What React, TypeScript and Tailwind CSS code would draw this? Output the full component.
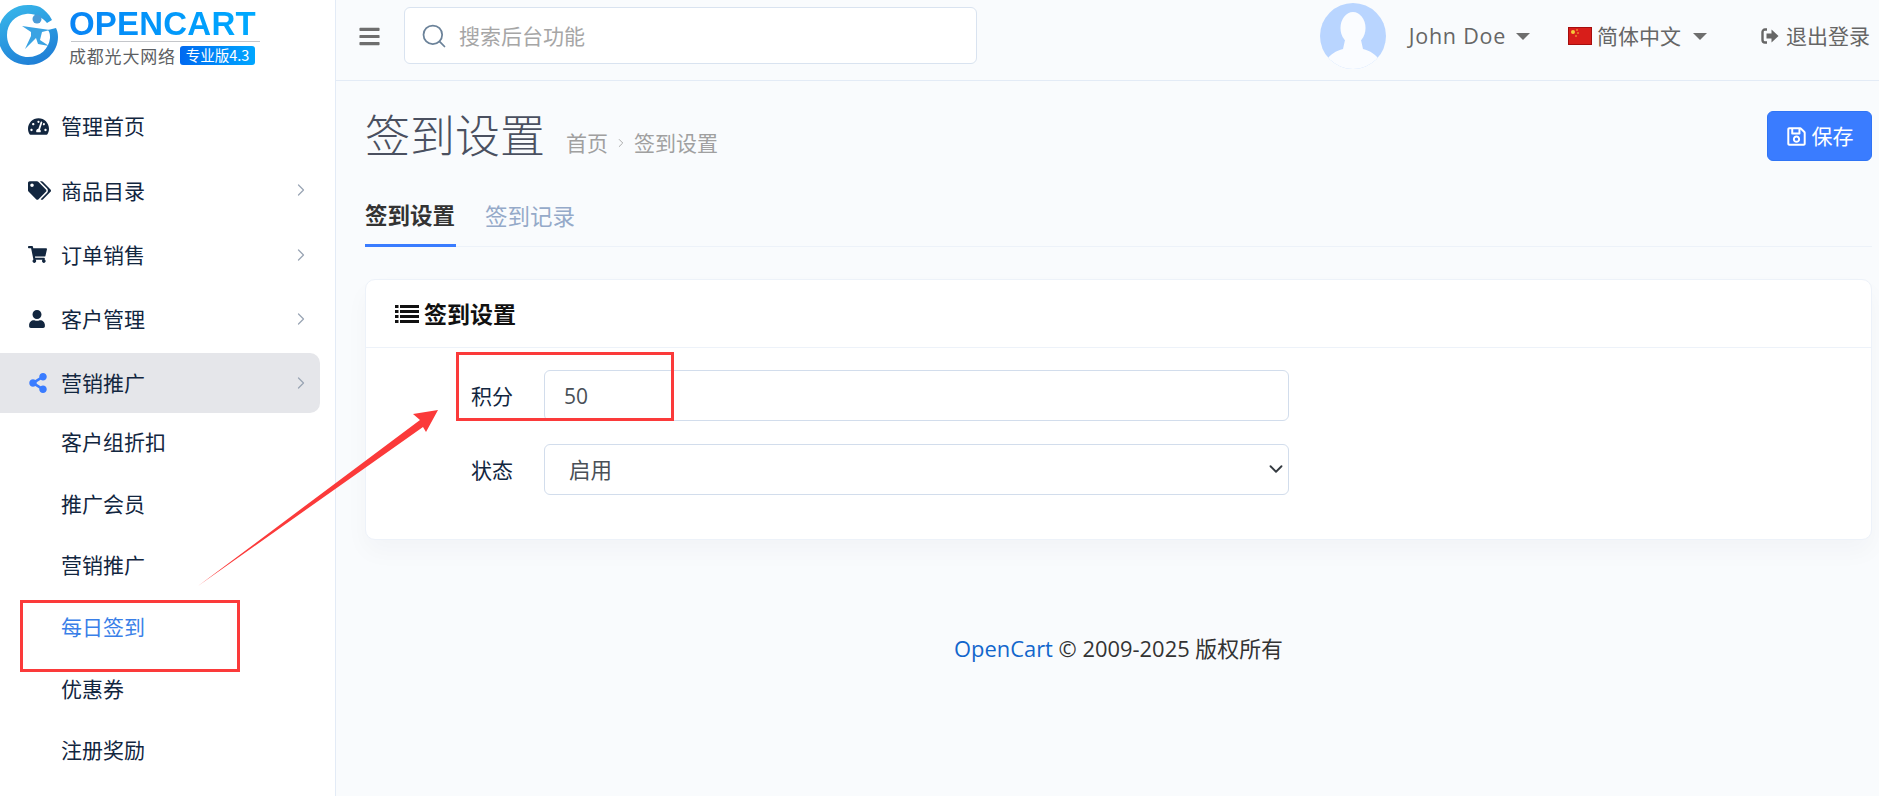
import { ChevronDown, ChevronRight, Search } from "lucide-react";
import { FaBars, FaRegSave, FaShareAlt, FaShoppingCart, FaTachometerAlt, FaTags, FaUser } from "react-icons/fa";
import type { ReactNode } from "react";

function Logo() {
  return (
    <div className="relative h-[80px]">
      <svg className="absolute left-[-2px] top-[5px]" width="60" height="60" viewBox="0 0 60 60">
        <defs>
          <linearGradient id="ring" x1="0.2" y1="0" x2="0.6" y2="1">
            <stop offset="0" stopColor="#38b6ea" />
            <stop offset="1" stopColor="#1f7fd6" />
          </linearGradient>
        </defs>
        <path
          d="M42 2C36 0 33 0 30 0C13 0 0 13 0 30C0 47 13 60 30 60C47 60 60 47 60 32C60 28 59 25 58 23L50 25C52 28 52 30 52 33C51 44 42 52 30 52C18 52 9 42 9 30C9 19 17 10 28 9C36 8 44 12 49 18L54 15C51 9 47 5 42 2Z"
          fill="url(#ring)"
        />
        <circle cx="39" cy="14" r="4.5" fill="#4a9bd8" />
        <path d="M24 21L52 25L44 27L42 35L51 41L40 39L38 33L27 44L33 31L33 27Z" fill="#3aa3e3" />
      </svg>
      <div className="absolute left-[69px] top-[5px] bg-gradient-to-r from-[#0a84f5] to-[#00aaff] bg-clip-text font-['Liberation_Sans',sans-serif] text-[33px] leading-[38px] font-bold tracking-[0.2px] text-transparent">
        OPENCART
      </div>
      <div className="absolute left-[71px] top-[41px] h-px w-[189px] bg-[#c4c6ca]" />
      <div className="absolute left-[69px] top-[46px] text-[17px] leading-[20px] tracking-[0.8px] text-[#5d5f63]">成都光大网络</div>
      <div className="absolute left-[180px] top-[46px] flex h-[19px] w-[75px] items-center justify-center rounded-[3px] bg-gradient-to-r from-[#0069f0] to-[#00a6ff] text-[14.5px] leading-none text-white">
        专业版4.3
      </div>
    </div>
  );
}

function NavItem({ icon, label, arrow, active }: { icon: ReactNode; label: string; arrow?: boolean; active?: boolean }) {
  return (
    <div className={`mb-[4.25px] flex h-[60px] items-center rounded-r-[10px] pl-[28px] pr-[9px] ${active ? "bg-[#e5e6ea]" : ""}`}>
      <span className={`flex w-[33px] shrink-0 items-center text-[20px] ${active ? "text-[#3a7cff]" : "text-[#12263f]"}`}>{icon}</span>
      <span className="flex-1 text-[21px] text-[#12263f]">{label}</span>
      {arrow && <ChevronRight size={20} strokeWidth={1.5} className="text-[#9aa5b5]" />}
    </div>
  );
}

const subItems = ["客户组折扣", "推广会员", "营销推广", "每日签到", "优惠券", "注册奖励"];

function Sidebar() {
  return (
    <aside className="w-[336px] shrink-0 border-r border-[#e3ebf6] bg-white pr-[15px]">
      <Logo />
      <nav className="pt-[16px]">
        <NavItem icon={<FaTachometerAlt className="text-[21px]" />} label="管理首页" />
        <NavItem icon={<FaTags className="text-[23px]" />} label="商品目录" arrow />
        <NavItem icon={<FaShoppingCart className="text-[19px]" />} label="订单销售" arrow />
        <NavItem icon={<FaUser className="text-[18px]" />} label="客户管理" arrow />
        <NavItem icon={<FaShareAlt />} label="营销推广" arrow active />
        <ul className="-mt-[6px]">
          {subItems.map((item) => (
            <li
              key={item}
              className={`flex h-[61.6px] items-center pl-[61px] text-[21px] ${item === "每日签到" ? "text-[#3a7fe8]" : "text-[#12263f]"}`}
            >
              {item}
            </li>
          ))}
        </ul>
      </nav>
    </aside>
  );
}

function Caret() {
  return <span className="h-0 w-0 border-x-[7px] border-t-[7px] border-x-transparent border-t-[#6e6e6e]" />;
}

function Topbar() {
  return (
    <header className="flex h-[81px] items-center border-b border-[#e3ebf6] pb-[8px] pl-[22px] pr-[9px] text-[#666]">
      <FaBars className="mr-[23px] text-[23px] text-[#6e6e6e]" />
      <div className="-mt-[1px] flex h-[57px] w-[573px] items-center rounded-[6px] border border-[#d9e3f0] bg-white pl-[15px]">
        <Search size={28} strokeWidth={1.5} className="mr-[11px] shrink-0 text-[#6b8299]" />
        <input
          readOnly
          placeholder="搜索后台功能"
          className="w-full bg-transparent text-[21px] outline-none placeholder:text-[#a6a6a6]"
        />
      </div>
      <div className="flex-1" />
      <svg width="66" height="66" viewBox="0 0 66 66" className="mr-[23px]">
        <defs>
          <clipPath id="avatar">
            <circle cx="33" cy="33" r="33" />
          </clipPath>
        </defs>
        <g clipPath="url(#avatar)">
          <rect width="66" height="66" fill="#b9d5ff" />
          <ellipse cx="33" cy="25" rx="12.5" ry="16" fill="#fafcff" />
          <path d="M25 37L41 37L43 46C50 48 56 51 60 58L60 66L6 66L6 58C10 51 16 48 23 46Z" fill="#fafcff" />
        </g>
      </svg>
      <span className="mr-[10px] font-['Open_Sans',sans-serif] text-[21.5px] tracking-[0.75px]">John Doe</span>
      <Caret />
      <svg width="24" height="18" viewBox="0 0 24 18" className="ml-[38px] mr-[5px]">
        <rect width="24" height="18" fill="#a50d0d" />
        <rect x="1" y="1" width="22" height="16" fill="#d81e1a" />
        <circle cx="5" cy="5" r="2" fill="#f5c93a" />
        <circle cx="9" cy="3" r="0.8" fill="#f5c93a" />
        <circle cx="10" cy="6" r="0.8" fill="#f5c93a" />
        <circle cx="8" cy="9" r="0.8" fill="#f5c93a" />
      </svg>
      <span className="mr-[12px] text-[21px]">简体中文</span>
      <Caret />
      <svg width="18" height="16" viewBox="0 0 18 16" className="ml-[54px] mr-[7px] text-[#666]">
        <path d="M6 1.5H4A2.5 2.5 0 0 0 1.5 4V12A2.5 2.5 0 0 0 4 14.5H6" fill="none" stroke="currentColor" strokeWidth="2.4" />
        <path d="M5.5 5.5H10.5V1.5L17.5 8L10.5 14.5V10.5H5.5Z" fill="currentColor" />
      </svg>
      <span className="text-[21px]">退出登录</span>
    </header>
  );
}

function Field({ label, children }: { label: string; children: ReactNode }) {
  return (
    <div className="flex h-[51px] items-center">
      <label className="w-[73px] text-[21px] text-[#12263f]">{label}</label>
      {children}
    </div>
  );
}

function SettingsCard() {
  return (
    <section className="mt-[32px] h-[261px] rounded-[10px] border border-[#edf2f9] bg-white shadow-[0_12px_24px_rgba(18,38,63,0.03)]">
      <div className="flex h-[68px] items-center gap-[5px] border-b border-[#edf2f9] pl-[29px] text-[23px] font-bold text-[#111]">
        <svg width="24" height="18" viewBox="0 0 24 18" fill="currentColor">
          <rect y="0" width="3.5" height="3" />
          <rect x="5" y="0" width="19" height="3" />
          <rect y="5" width="3.5" height="3" />
          <rect x="5" y="5" width="19" height="3" />
          <rect y="10" width="3.5" height="3" />
          <rect x="5" y="10" width="19" height="3" />
          <rect y="15" width="3.5" height="3" />
          <rect x="5" y="15" width="19" height="3" />
        </svg>
        签到设置
      </div>
      <div className="flex flex-col gap-[23px] pl-[105px] pt-[22px]">
        <Field label="积分">
          <input
            readOnly
            value="50"
            className="h-full w-[745px] rounded-[6px] border border-[#d2ddec] bg-white pl-[19px] font-['Open_Sans',sans-serif] text-[21px] text-[#495057] outline-none"
          />
        </Field>
        <Field label="状态">
          <div className="relative h-full w-[745px]">
            <select className="h-full w-full appearance-none rounded-[6px] border border-[#d2ddec] bg-white pl-[24px] text-[21.5px] text-[#495057] outline-none">
              <option>启用</option>
            </select>
            <ChevronDown size={22} strokeWidth={2} className="absolute right-[2px] top-[14px] text-[#343a40]" />
          </div>
        </Field>
      </div>
    </section>
  );
}

function Annotations() {
  return (
    <>
      <div className="absolute left-[20px] top-[600px] h-[72px] w-[220px] border-[3px] border-[#fb3a3a]" />
      <div className="absolute left-[456px] top-[352px] h-[69px] w-[218px] border-[3px] border-[#fb3a3a]" />
      <svg className="absolute left-[190px] top-[400px]" width="260" height="195" viewBox="190 400 260 195">
        <path d="M198 586L420 420L413 414L438 410L426 432L423 427Z" fill="#fb3a3a" />
      </svg>
    </>
  );
}

export default function App() {
  return (
    <div className="relative flex h-[796px] w-full overflow-hidden bg-[#f9fbfd] font-['Noto_Sans_CJK_SC','Open_Sans',sans-serif]">
      <Sidebar />
      <main className="min-w-0 flex-1">
        <Topbar />
        <div className="pl-[29px] pr-[7px] pt-[15px]">
          <div className="flex h-[80px] items-center">
            <h1 className="-mt-[6px] text-[45px] leading-none font-light text-[#4a5060]">签到设置</h1>
            <div className="ml-[21px] mt-[14px] flex items-center text-[21px] text-[#a0a0a0]">
              <span>首页</span>
              <ChevronRight size={14} strokeWidth={1.5} className="mx-[6px]" />
              <span>签到设置</span>
            </div>
            <button className="ml-auto flex h-[50px] w-[105px] items-center justify-center gap-[5px] rounded-[6px] border border-[#2f74f5] bg-[#3a7cff] text-[21px] text-white">
              <FaRegSave className="text-[21px]" />
              保存
            </button>
          </div>
          <div className="mt-[9px] flex h-[62px] gap-[29px] border-b border-[#edf2f9]">
            <div className="-mb-px flex w-[91px] items-center border-b-[3px] border-[#3a7cff] text-[22.5px] font-bold text-[#333]">签到设置</div>
            <div className="flex items-center text-[22.5px] text-[#95aac9]">签到记录</div>
          </div>
          <SettingsCard />
          <footer className="mt-[92px] text-center text-[21.9px] text-[#333]">
            <span className="font-['Open_Sans','Noto_Sans_CJK_SC',sans-serif]">
              <span className="text-[#1266cc]">OpenCart</span> © 2009-2025 版权所有
            </span>
          </footer>
        </div>
      </main>
      <Annotations />
    </div>
  );
}
